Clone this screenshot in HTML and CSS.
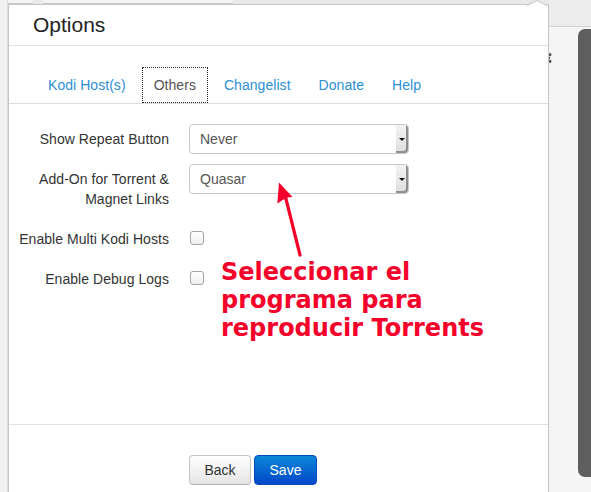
FILE: index.html
```html
<!DOCTYPE html>
<html>
<head>
<meta charset="utf-8">
<link rel="stylesheet" href="styles.css">
</head>
<body>
<div class="page">
  <div class="gutter"></div>
  <div class="popup-col">
    <div class="top-strip"><span class="tb tb-a"></span><span class="tb tb-b"></span></div>
    <div class="panel">
      <svg class="notch" width="20" height="6" viewBox="0 0 20 6"><path d="M0 5.5 L10 0.5 L20 5.5" fill="#fff" stroke="#c4c4c4" stroke-width="1"/></svg>
      <div class="header">Options</div>
      <ul class="tabs">
        <li class="tab">Kodi Host(s)</li>
        <li class="tab active">Others</li>
        <li class="tab">Changelist</li>
        <li class="tab">Donate</li>
        <li class="tab">Help</li>
      </ul>
      <div class="content">
        <div class="form">
          <div class="label">Show Repeat Button</div>
          <div class="control"><div class="select"><span class="sel-text">Never</span><span class="sel-arrow"><span class="tri"></span></span></div></div>
          <div class="label">Add-On for Torrent &amp;<br>Magnet Links</div>
          <div class="control"><div class="select"><span class="sel-text">Quasar</span><span class="sel-arrow"><span class="tri"></span></span></div></div>
          <div class="label">Enable Multi Kodi Hosts</div>
          <div class="control"><span class="checkbox"></span></div>
          <div class="label">Enable Debug Logs</div>
          <div class="control"><span class="checkbox"></span></div>
        </div>
      </div>
      <div class="footer">
        <button class="btn btn-back">Back</button>
        <button class="btn btn-save">Save</button>
      </div>
      <div class="note">Seleccionar el<br>programa para<br>reproducir Torrents</div>
      <svg class="arrow" width="50" height="90" viewBox="0 0 50 90">
        <line x1="40" y1="80" x2="25.5" y2="22" stroke="#f5002a" stroke-width="3.2" stroke-linecap="round"/>
        <path d="M19 7.5 L32.5 22 L26.5 22.5 L17.3 28.5 Z" fill="#f5002a"/>
      </svg>
    </div>
  </div>
  <div class="right">
    <div class="right-top"></div>
    <div class="right-body">
      <svg class="gear" width="6" height="12" viewBox="0 0 6 12">
        <path d="M0 1.5 L2 1 L2.6 3 L1.5 4.2 L0 4.2 Z M0 7.8 L1.5 7.8 L2.6 9 L2 11 L0 10.5 Z M0 5 L1 5 L1 7 L0 7 Z" fill="#555"/>
      </svg>
      <div class="scrollbar"></div>
    </div>
  </div>
</div>
</body>
</html>
```
FILE: styles.css
```css
html, body {
  margin: 0;
  padding: 0;
}
body {
  width: 591px;
  height: 492px;
  overflow: hidden;
  background: #efefef;
  font-family: "Liberation Sans", Arial, sans-serif;
  font-size: 14px;
  color: #333;
}
.page {
  display: flex;
  height: 492px;
}
.gutter {
  width: 7px;
  background: #f1f1f1;
  border-right: 1px solid #dcdcdc;
  flex: none;
}
.popup-col {
  width: 541px;
  flex: none;
  display: flex;
  flex-direction: column;
}
.top-strip {
  height: 4px;
  background: #e9e9e9;
  display: flex;
  flex: none;
}
.tb {
  display: block;
  height: 3px;
  border-bottom: 1px solid #c9c9c9;
  background: #f4f4f4;
}
.tb-a { width: 25px; }
.tb-b { width: 190px; margin-left: 10px; }
.panel {
  position: relative;
  background: #fff;
  border: 1px solid #c6c6c6;
  border-bottom: none;
  height: 600px;
  flex: none;
}
.notch {
  position: absolute;
  left: 518px;
  top: -5px;
}
.header {
  height: 40px;
  line-height: 40px;
  padding-left: 24px;
  font-size: 21px;
  color: #222;
  border-bottom: 1px solid #e3e3e3;
}
.tabs {
  list-style: none;
  margin: 21px 0 0 0;
  padding: 0 0 0 27px;
  display: flex;
  gap: 4px;
  border-bottom: 1px solid #dddddd;
}
.tab {
  height: 34px;
  line-height: 34px;
  padding: 0 11px;
  border: 1px solid transparent;
  color: #2b8fd6;
  font-size: 14px;
  letter-spacing: 0.05px;
}
.tab.active {
  border: 1px dotted #222;
  color: #555;
}
.content {
  height: 320px;
  padding-top: 20px;
  box-sizing: border-box;
}
.form {
  display: grid;
  grid-template-columns: 160px 220px;
  column-gap: 20px;
  row-gap: 10px;
}
.label {
  text-align: right;
  line-height: 20px;
  padding: 5px 0;
  color: #333;
  letter-spacing: 0.05px;
}
.control {
  display: flex;
  align-items: flex-start;
}
.select {
  width: 220px;
  height: 30px;
  box-sizing: border-box;
  border: 1px solid #c8c8c8;
  border-radius: 4px;
  display: flex;
  overflow: hidden;
  background: #fff;
}
.sel-text {
  flex: 1;
  padding-left: 10px;
  line-height: 28px;
  color: #555;
}
.sel-arrow {
  width: 12px;
  background: linear-gradient(#f2f2f2, #dedede);
  box-shadow: inset -2px -2px 0 #8e8e8e;
  display: flex;
  align-items: center;
  justify-content: center;
  border-radius: 0 3px 3px 0;
}
.tri {
  width: 0;
  height: 0;
  border-left: 3px solid transparent;
  border-right: 3px solid transparent;
  border-top: 3px solid #111;
  margin-right: 1px;
  margin-top: 1px;
}
.checkbox {
  display: block;
  width: 14px;
  height: 14px;
  box-sizing: border-box;
  border: 1px solid #a4a4a4;
  border-radius: 3px;
  background: linear-gradient(#ffffff, #ededed);
  margin: 7px 0 0 1px;
}
.footer {
  border-top: 1px solid #e3e3e3;
  padding: 30px 0 20px 180px;
  display: flex;
  gap: 3px;
}
.btn {
  height: 30px;
  box-sizing: border-box;
  font-family: "Liberation Sans", Arial, sans-serif;
  font-size: 14px;
  border-radius: 4px;
  padding: 0;
  line-height: 28px;
}
.btn-back {
  width: 62px;
  color: #333;
  background: linear-gradient(#ffffff, #e4e4e4);
  border: 1px solid #c4c4c4;
  border-bottom-color: #b0b0b0;
}
.btn-save {
  width: 63px;
  color: #fff;
  background: linear-gradient(#0a87d8, #0348c8);
  border: 1px solid #0449bd;
}
.note {
  position: absolute;
  left: 212px;
  top: 253px;
  font-family: "DejaVu Sans", sans-serif;
  font-weight: bold;
  font-size: 24px;
  line-height: 28px;
  color: #f5002a;
  white-space: nowrap;
}
.arrow {
  position: absolute;
  left: 251px;
  top: 170px;
}
.right {
  flex: 1;
  display: flex;
  flex-direction: column;
}
.right-top {
  height: 26px;
  background: #ececec;
  border-bottom: 1px solid #d2d2d2;
  flex: none;
}
.right-body {
  flex: 1;
  display: flex;
  justify-content: flex-end;
  background: #f5f5f5;
  position: relative;
  overflow: hidden;
}
.gear {
  position: absolute;
  left: 0;
  top: 25px;
}
.scrollbar {
  width: 13px;
  margin-top: 2px;
  height: 448px;
  background: #5e5e5e;
  border-radius: 7px 0 0 7px;
}
```
